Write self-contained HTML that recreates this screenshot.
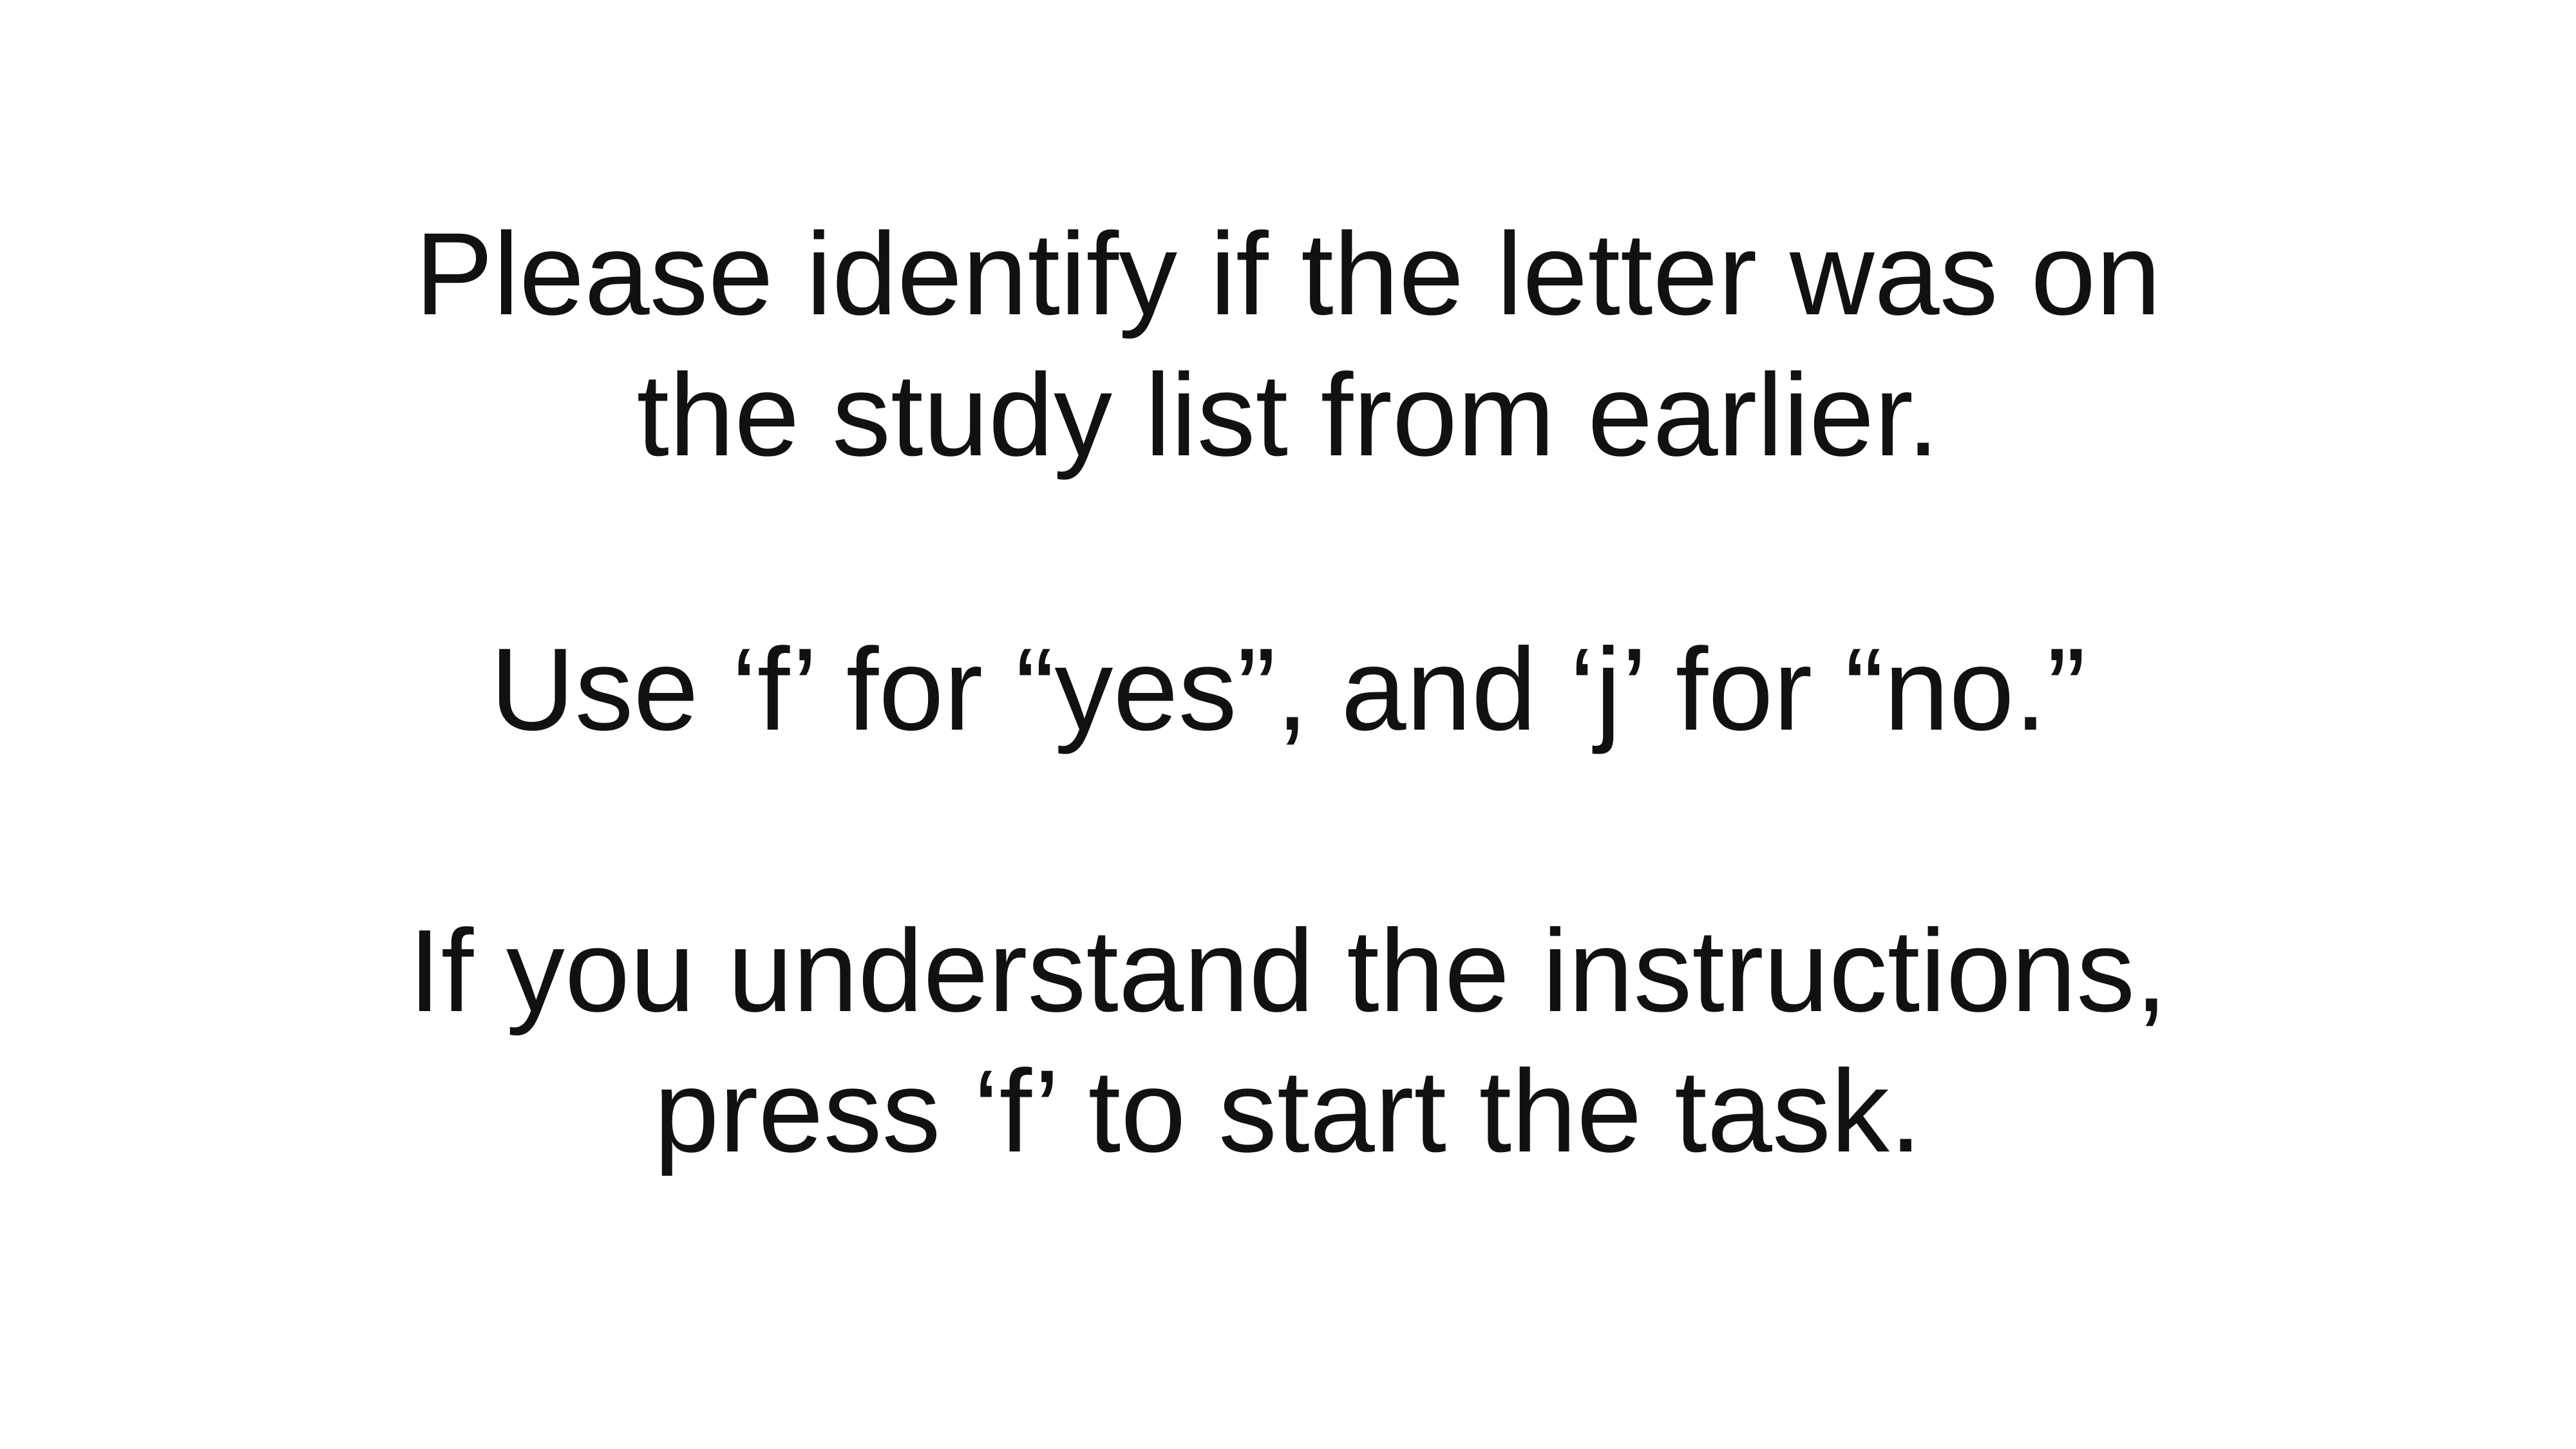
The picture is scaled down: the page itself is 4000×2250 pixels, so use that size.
<!DOCTYPE html>
<html><head><meta charset="utf-8"><style>
html,body{margin:0;padding:0;background:#fff;}
body{width:4000px;height:2250px;position:relative;overflow:hidden;font-family:"Liberation Sans",sans-serif;color:#111;}
.l{position:absolute;left:0;width:4000px;text-align:center;font-size:182px;line-height:220px;height:220px;white-space:nowrap;font-weight:normal;}
</style></head><body>
<div class="l" style="top:315px">Please identify if the letter was on</div>
<div class="l" style="top:534px">the study list from earlier.</div>
<div class="l" style="top:960px">Use ‘f’ for “yes”, and ‘j’ for “no.”</div>
<div class="l" style="top:1397px">If you understand the instructions,</div>
<div class="l" style="top:1615px">press ‘f’ to start the task.</div>
</body></html>
